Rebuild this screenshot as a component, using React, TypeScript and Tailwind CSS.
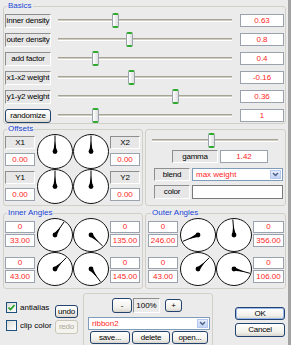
import React from "react";

type Kids = { children?: React.ReactNode; className?: string };

const Label = ({ children, className = "" }: Kids) => (
  <div
    className={`flex items-center justify-center whitespace-nowrap tracking-[-0.2px] border border-t-[#8e8e8e] border-l-[#8e8e8e] border-b-white border-r-white bg-[#e7e7e7] ${className}`}
  >
    {children}
  </div>
);

const Value = ({ children, className = "" }: Kids) => (
  <div className={`flex items-center justify-center bg-white border border-[#9aa2ad] text-[#ff2626] ${className}`}>
    {children}
  </div>
);

const Btn = ({ children, className = "", disabled }: Kids & { disabled?: boolean }) => (
  <div
    className={`flex items-center justify-center whitespace-nowrap tracking-[-0.2px] rounded-[3px] border ${
      disabled
        ? "border-[#c9c7ba] text-[#aca899] bg-[#f4f3ee]"
        : "border-[#24426e] bg-[linear-gradient(#ffffff,#f0efea_70%,#d8d5cc)]"
    } ${className}`}
  >
    {children}
  </div>
);

const Thumb = ({ left }: { left: number }) => (
  <div
    className="absolute top-0 h-[15px] w-[7px] rounded-[2px] border-x border-x-[#9aa3ad] border-y-2 border-y-[#2faa2f] bg-[linear-gradient(to_right,#ffffff,#dedede)]"
    style={{ left }}
  />
);

const Slider = ({ left, className = "" }: { left: number; className?: string }) => (
  <div className={`relative flex items-center h-[15px] ${className}`}>
    <div className="w-full h-[3px] border-t border-t-[#a6a494] border-b border-b-white bg-[#cfcdc1]" />
    <Thumb left={left} />
  </div>
);

const Dial = ({ angle, h = 34 }: { angle: number; h?: number }) => {
  const cx = 18;
  const cy = h / 2;
  const rx = 17.5;
  const ry = h / 2 - 0.5;
  const a = (angle * Math.PI) / 180;
  const dx = Math.sin(a);
  const dy = -Math.cos(a);
  const tx = cx + dx * (rx - 1);
  const ty = cy + dy * (ry - 1);
  const mx = cx + dx * rx * 0.62;
  const my = cy + dy * ry * 0.62;
  const w = 1.8;
  const pts = `${cx - dy * w},${cy + dx * w} ${mx},${my} ${cx + dy * w},${cy - dx * w}`;
  return (
    <svg width={36} height={h} className="block">
      <ellipse cx={cx} cy={cy} rx={rx} ry={ry} fill="#fff" stroke="#111" strokeWidth={1} />
      <line x1={cx} y1={cy} x2={tx} y2={ty} stroke="#000" strokeWidth={1} />
      <polygon points={pts} fill="#000" />
      <circle cx={cx} cy={cy} r={2.4} fill="#000" />
    </svg>
  );
};

const Check = ({ checked, label }: { checked?: boolean; label: string }) => (
  <div className="flex items-center h-[11px] whitespace-nowrap">
    <div className="w-[11px] h-[11px] border border-[#1c5180] bg-[linear-gradient(135deg,#dcdcd6,#ffffff)] flex items-center justify-center">
      {checked && (
        <svg width="7" height="7" viewBox="0 0 7 7">
          <path d="M0.5 3.5 L2.5 5.5 L6.5 1" fill="none" stroke="#21a121" strokeWidth="1.6" />
        </svg>
      )}
    </div>
    <span className="ml-[3px]">{label}</span>
  </div>
);

const Arrow = () => (
  <div className="w-[11px] h-full border border-[#b8c9ef] bg-[linear-gradient(#e6eefc,#c3d3f4)] flex items-center justify-center">
    <svg width="7" height="5" viewBox="0 0 7 5">
      <path d="M1 1 L3.5 3.5 L6 1" fill="none" stroke="#4d6185" strokeWidth="1.5" />
    </svg>
  </div>
);

const basics = [
  { name: "inner density", value: "0.63", pos: 54 },
  { name: "outer density", value: "0.8", pos: 68 },
  { name: "add factor", value: "0.4", pos: 34 },
  { name: "x1-x2 weight", value: "-0.16", pos: 70 },
  { name: "y1-y2 weight", value: "0.36", pos: 114 },
];

const AnglePair = ({ a, b }: { a: string; b: string }) => (
  <div className="flex flex-col gap-[1px]">
    <Value className="h-[12px]">{a}</Value>
    <Value className="h-[13px]">{b}</Value>
  </div>
);

const AngleGroup = ({
  title,
  left,
  right,
  dials,
  legendClass,
  leftClass,
  rightClass,
}: {
  title: string;
  left: string[];
  right: string[];
  dials: number[];
  legendClass: string;
  leftClass: string;
  rightClass: string;
}) => (
  <fieldset className="border border-[#d0d0c8] rounded-[3px] h-[81px] px-[1px]">
    <legend className={`px-[1px] text-[#1a46d6] ${legendClass}`}>{title}</legend>
    <div className="flex">
      <div className={`flex flex-col pt-[3px] gap-[10px] ${leftClass}`}>
        <AnglePair a="0" b={left[0]} />
        <AnglePair a="0" b={left[1]} />
      </div>
      <div className="ml-[2px] grid grid-cols-2">
        {dials.map((d, i) => (
          <Dial key={i} angle={d} />
        ))}
      </div>
      <div className={`flex flex-col pt-[3px] gap-[10px] ml-[1px] ${rightClass}`}>
        <AnglePair a="0" b={right[0]} />
        <AnglePair a="0" b={right[1]} />
      </div>
    </div>
  </fieldset>
);

export default function App() {
  return (
    <div className="w-[291px] h-[345px] overflow-hidden bg-[#ebebeb] border-r-[3px] border-r-[#a2a2a2] pl-[3px] pr-[2px] pt-[1px] flex flex-col text-[8px] leading-[10px] text-black [font-family:'Liberation_Sans',Arial,sans-serif]">
      {/* Basics */}
      <fieldset className="border border-[#d0d0c8] rounded-[3px] h-[123px] px-[1px]">
        <legend className="ml-[2px] px-[1px] text-[#1a46d6]">Basics</legend>
        <div className="mt-[2px] flex flex-col gap-[4px]">
          {basics.map((b) => (
            <div key={b.name} className="flex items-center h-[15px]">
              <Label className="w-[46px] h-[14px]">{b.name}</Label>
              <Slider left={b.pos} className="ml-[7px] w-[174px]" />
              <Value className="ml-[8px] w-[44px] h-[13px]">{b.value}</Value>
            </div>
          ))}
          <div className="flex items-center h-[15px]">
            <Btn className="w-[46px] h-[14px]">randomize</Btn>
            <Slider left={34} className="ml-[7px] w-[174px]" />
            <Value className="ml-[8px] w-[44px] h-[13px]">1</Value>
          </div>
        </div>
      </fieldset>

      {/* Offsets + gamma */}
      <div className="flex gap-[2px] h-[82px]">
        <fieldset className="border border-[#d0d0c8] rounded-[3px] w-[140px] h-[82px] px-[1px]">
          <legend className="ml-[2px] px-[1px] text-[#1a46d6]">Offsets</legend>
          <div className="flex">
            <div className="w-[30px] mt-[2px] flex flex-col">
              <Label className="h-[13px]">X1</Label>
              <Value className="h-[13px] mt-[4px]">0.00</Value>
              <Label className="h-[13px] mt-[5px]">Y1</Label>
              <Value className="h-[13px] mt-[4px]">0.00</Value>
            </div>
            <div className="ml-[2px] grid grid-cols-2">
              <Dial angle={0} h={35} />
              <Dial angle={0} h={35} />
              <Dial angle={0} h={35} />
              <Dial angle={0} h={35} />
            </div>
            <div className="w-[30px] ml-[1px] mt-[2px] flex flex-col">
              <Label className="h-[13px]">X2</Label>
              <Value className="h-[13px] mt-[4px]">0.00</Value>
              <Label className="h-[13px] mt-[5px]">Y2</Label>
              <Value className="h-[13px] mt-[4px]">0.00</Value>
            </div>
          </div>
        </fieldset>
        <div className="w-[141px] mt-[5px] h-[77px] border border-[#d0d0c8] rounded-[3px] pt-[3px] flex flex-col">
          <Slider left={56} className="ml-[6px] w-[126px]" />
          <div className="flex mt-[2px] h-[13px]">
            <Label className="ml-[26px] w-[46px]">gamma</Label>
            <Value className="ml-[2px] w-[48px]">1.42</Value>
          </div>
          <div className="flex mt-[5px] h-[13px]">
            <Label className="ml-[8px] w-[36px]">blend</Label>
            <div className="ml-[2px] w-[91px] flex items-center bg-white border border-[#7f9db9] pl-[3px] pr-[1px] py-[1px] text-[#ff2626]">
              <span className="flex-1">max weight</span>
              <Arrow />
            </div>
          </div>
          <div className="flex mt-[4px] h-[14px]">
            <Label className="ml-[8px] w-[36px]">color</Label>
            <div className="ml-[2px] w-[91px] bg-white border border-[#7a7a7a]" />
          </div>
        </div>
      </div>

      {/* Angles */}
      <div className="flex gap-[2px] mt-[2px]">
        <div className="w-[140px]">
          <AngleGroup
            title="Inner Angles"
            left={["33.00", "43.00"]}
            right={["135.00", "145.00"]}
            dials={[33, 135, 43, 145]}
            legendClass="ml-[2px]"
            leftClass="w-[30px]"
            rightClass="w-[30px]"
          />
        </div>
        <div className="w-[141px]">
          <AngleGroup
            title="Outer Angles"
            left={["246.00", "43.00"]}
            right={["356.00", "106.00"]}
            dials={[246, 356, 43, 106]}
            legendClass="ml-[4px]"
            leftClass="w-[30px] ml-[1px]"
            rightClass="w-[31px]"
          />
        </div>
      </div>

      {/* Bottom */}
      <div className="flex h-[56px]">
        <div className="w-[52px] pl-[3px] pt-[13px] flex flex-col gap-[7px]">
          <Check checked label="antialias" />
          <Check label="clip color" />
        </div>
        <div className="w-[23px] pt-[16px] flex flex-col gap-[2px]">
          <Btn className="h-[13px]">undo</Btn>
          <Btn disabled className="h-[14px]">redo</Btn>
        </div>
        <fieldset className="ml-[5px] mt-[4px] w-[130px] h-[60px] border border-[#d0d0c8] rounded-[3px]">
          <div className="flex items-center mt-[4px] h-[15px]">
            <Btn className="ml-[28px] w-[20px] h-[15px]">-</Btn>
            <div className="ml-[1px] w-[27px] h-[15px] flex items-center justify-center border border-t-[#8e8e8e] border-l-[#8e8e8e] border-b-white border-r-white">
              100%
            </div>
            <Btn className="ml-[5px] w-[17px] h-[13px]">+</Btn>
          </div>
          <div className="ml-[4px] mt-[4px] w-[122px] h-[13px] flex items-center bg-white border border-[#7f9db9] pl-[3px] pr-[1px] py-[1px] text-[#ff2626]">
            <span className="flex-1">ribbon2</span>
            <Arrow />
          </div>
          <div className="flex mt-[1px] h-[13px]">
            <Btn className="ml-[6px] w-[40px]">save...</Btn>
            <Btn className="ml-[2px] w-[38px]">delete</Btn>
            <Btn className="ml-[2px] w-[36px]">open...</Btn>
          </div>
        </fieldset>
        <div className="ml-[22px] w-[50px] pt-[18px] flex flex-col gap-[3px]">
          <Btn className="h-[13px] shadow-[inset_0_0_0_1px_#98b8f0]">OK</Btn>
          <Btn className="h-[14px]">Cancel</Btn>
        </div>
      </div>
    </div>
  );
}
